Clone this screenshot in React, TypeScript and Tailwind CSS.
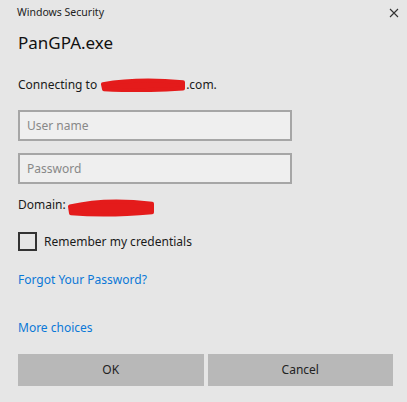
import React from 'react';

const font = { fontFamily: '"Noto Sans", "Open Sans", sans-serif' };

function Scribble({ w, h }: { w: number; h: number }) {
    return (
        <svg width={w} height={h} viewBox={`0 0 ${w} ${h}`} className="inline-block">
            <path
                d={`M3 ${h * 0.45} C ${w * 0.3} ${h * 0.15}, ${w * 0.6} ${h * 0.1}, ${w - 3} ${h * 0.3} L ${w - 3} ${h * 0.75} C ${w * 0.6} ${h * 0.9}, ${w * 0.3} ${h * 0.9}, 4 ${h * 0.8} Z`}
                fill="#e41b1b"
                stroke="#e41b1b"
                strokeWidth={4}
                strokeLinejoin="round"
            />
        </svg>
    );
}

export default function App() {
    return (
        <div className="w-[407px] h-[402px] bg-[#e6e6e6] text-[#1a1a1a] relative overflow-hidden" style={font}>
            {/* title bar */}
            <div className="flex items-center justify-between pl-[17px] pr-[8px] pt-[4px] h-[22px]">
                <span className="text-[10.5px] text-[#222]">Windows Security</span>
                <svg width="10" height="10" viewBox="0 0 10 10">
                    <path d="M1 1 L9 9 M9 1 L1 9" stroke="#333" strokeWidth="1.1" />
                </svg>
            </div>

            <div className="px-[18px]">
                <div className="text-[17px] leading-[26px] mt-[8px] text-[#111]">PanGPA.exe</div>

                <div className="flex items-center text-[12px] mt-[19px] h-[20px]">
                    <span>Connecting to</span>
                    <span className="ml-[3px] mt-[-1px]"><Scribble w={86} h={14} /></span>
                    <span>.com.</span>
                </div>

                <div className="mt-[15px] w-[274px] h-[31px] border-2 border-[#a6a6a6] bg-[#efefef] flex items-center px-[7px] text-[12px] text-[#888]">
                    User name
                </div>
                <div className="mt-[12px] w-[274px] h-[31px] border-2 border-[#a6a6a6] bg-[#efefef] flex items-center px-[7px] text-[12px] text-[#888]">
                    Password
                </div>

                <div className="flex items-center text-[12px] mt-[11px] h-[20px]">
                    <span>Domain:</span>
                    <span className="ml-[1px] mt-[4px]"><Scribble w={88} h={19} /></span>
                </div>

                <div className="flex items-center mt-[17px] h-[19px]">
                    <div className="w-[19px] h-[19px] border-2 border-[#333] bg-transparent" />
                    <span className="ml-[7px] text-[12px]">Remember my credentials</span>
                </div>

                <div className="mt-[20px] text-[12px] text-[#0a78d7]">Forgot Your Password?</div>

                <div className="mt-[30px] text-[12px] text-[#0a78d7]">More choices</div>

                <div className="mt-[17px] flex gap-[4px] w-[375px]">
                    <div className="flex-1 h-[32px] bg-[#b8b8b8] flex items-center justify-center text-[12px] text-[#222]">OK</div>
                    <div className="flex-1 h-[32px] bg-[#b8b8b8] flex items-center justify-center text-[12px] text-[#222]">Cancel</div>
                </div>
            </div>
        </div>
    );
}
